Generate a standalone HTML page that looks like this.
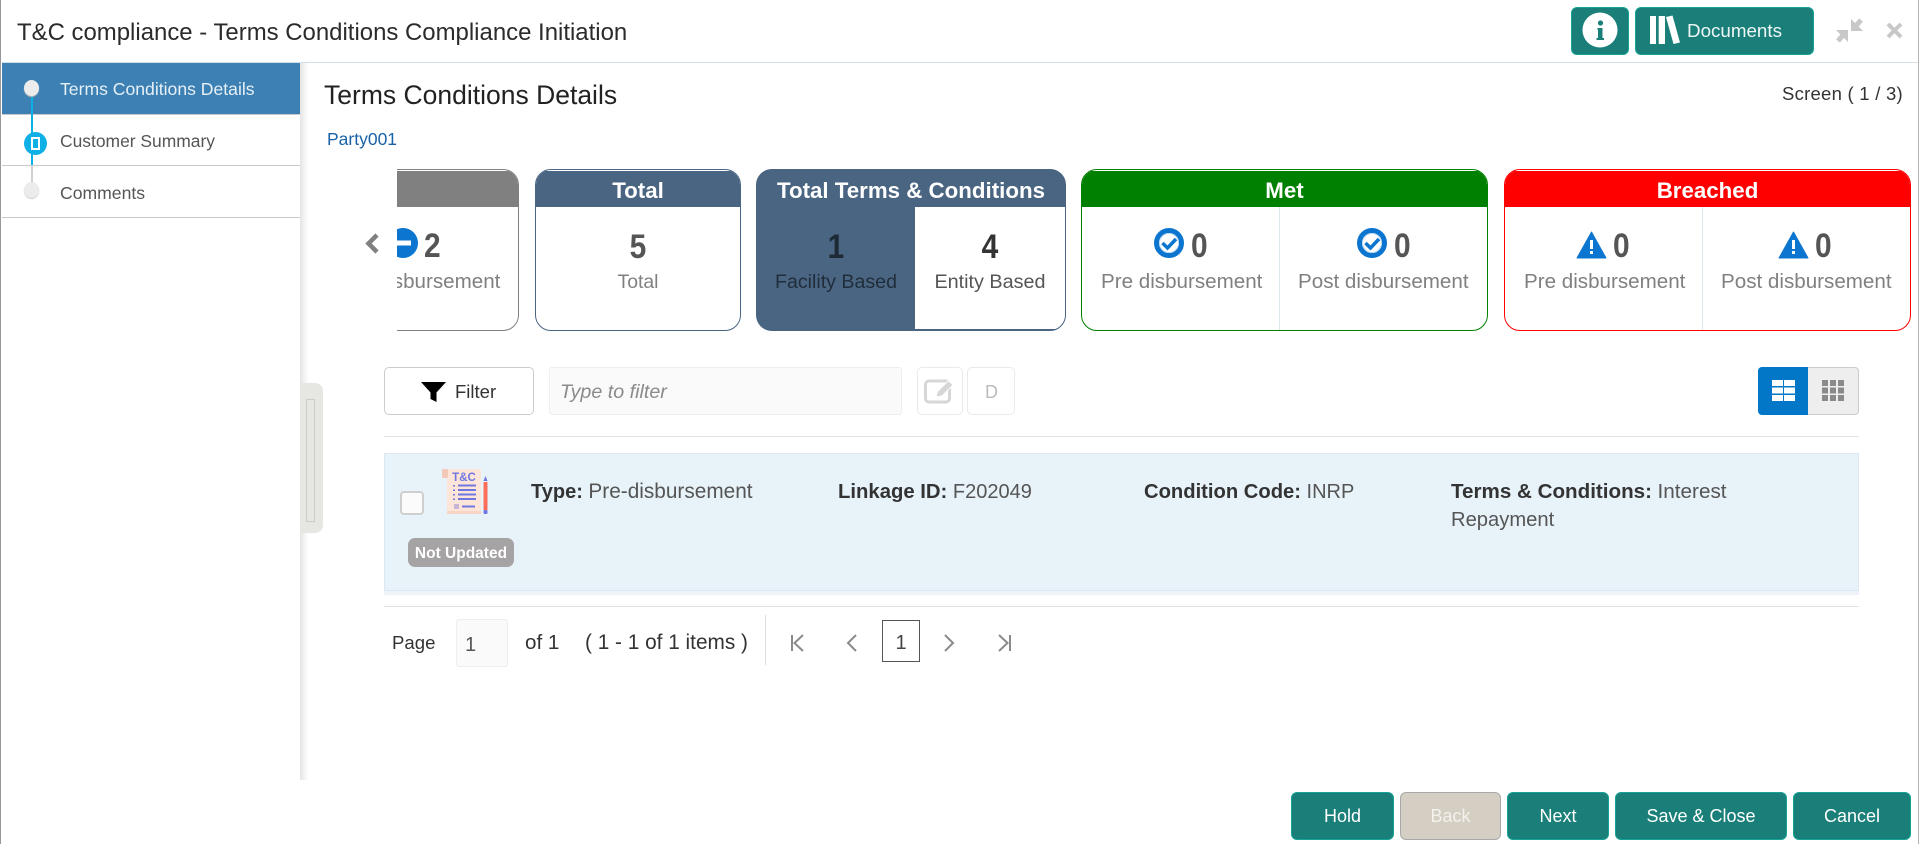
<!DOCTYPE html>
<html lang="en"><head><meta charset="utf-8"><title>T&amp;C compliance</title>
<style>
html,body{margin:0;padding:0;background:#fff}
#p{position:relative;width:1920px;height:844px;overflow:hidden;background:#fff;font-family:"Liberation Sans",Arial,sans-serif;color:#333}
.t{position:absolute;white-space:nowrap;line-height:30px}
.a{position:absolute;box-sizing:border-box}
.c{text-align:center}
.card{position:absolute;box-sizing:border-box;top:169px;height:162px;border:1px solid;border-radius:16px;overflow:hidden;background:#fff}
.hd{position:absolute;left:0;right:0;top:1px;height:36px;color:#fff;font-weight:bold;font-size:22.300px;line-height:40px;text-align:center}
.lb{color:#808080;font-size:20.600px}
.n{font-weight:bold;font-size:34px;color:#555;transform:scaleX(.88);transform-origin:0 50%}
.n.c{transform-origin:50% 50%}
.b{position:absolute;box-sizing:border-box;top:792px;height:48px;background:#1b7f79;border:1px solid #14a396;border-radius:6px;color:#fff;font-size:18px;line-height:46px;text-align:center}
svg{position:absolute;overflow:visible}
b{color:#333}
.v{color:#555;font-size:20px}
</style></head><body><div id="p">
<!-- window frame -->
<div class="a" style="left:0;top:0;width:1px;height:844px;background:#999"></div>
<div class="a" style="left:1918px;top:0;width:1px;height:844px;background:#b5b5b5"></div>
<div class="a" style="left:2px;top:62px;width:1916px;height:1px;background:#d5dfe5"></div>
<div class="t" style="left:17px;top:18px;font-size:23.950px;color:#2b2b2b">T&amp;C compliance - Terms Conditions Compliance Initiation</div>

<!-- header buttons -->
<div class="a" style="left:1571px;top:7px;width:58px;height:48px;background:#1b7f79;border:1px solid #14a396;border-radius:6px"></div>
<div class="a" style="left:1635px;top:7px;width:179px;height:48px;background:#1b7f79;border:1px solid #14a396;border-radius:6px"></div>
<svg style="left:0;top:0" width="1920" height="70">
<circle cx="1600" cy="30" r="17.500" fill="#fff"/>
<circle cx="1600.500" cy="23" r="2.600" fill="#1b7f79"/>
<path d="M1597.500 28h5v10h1.500v2h-7.500v-2h1.500v-8h-.5z" fill="#1b7f79"/>
<path d="M1650 16h6v28h-6zM1658.700 16h6.300v28h-6.300zM1666 17l6.500-1.500 7.500 27-6.500 1.500z" fill="#fff"/>
<path d="M1851 19v12h12z M1848 42V30h-12z" fill="#c8c8c8"/>
<path d="M1855 27l6-7M1844 34l-6 7" stroke="#c8c8c8" stroke-width="5" fill="none"/>
<path d="M1888 24l13 13M1901 24l-13 13" stroke="#c8c8c8" stroke-width="4" fill="none"/>
</svg>
<div class="t" style="left:1687px;top:16px;font-size:18.800px;color:#eef6f5">Documents</div>
<div class="t" style="left:1782px;top:79px;font-size:18.500px;letter-spacing:.25px;color:#333">Screen ( 1 / 3)</div>

<!-- sidebar -->
<div class="a" style="left:300px;top:63px;width:9px;height:717px;background:linear-gradient(90deg,#e4e4e4,#f6f6f6 60%,#fff)"></div>
<div class="a" style="left:2px;top:63px;width:298px;height:51px;background:#3d80b3"></div>
<div class="a" style="left:2px;top:114px;width:298px;height:1px;background:#c9c9c9"></div>
<div class="a" style="left:2px;top:165px;width:298px;height:1px;background:#c9c9c9"></div>
<div class="a" style="left:2px;top:217px;width:298px;height:1px;background:#c9c9c9"></div>
<div class="a" style="left:31px;top:95px;width:2px;height:70px;background:#0ab1e6"></div>
<div class="a" style="left:31px;top:165px;width:2px;height:18px;background:#d0d0d0"></div>
<div class="a" style="left:24px;top:80px;width:15px;height:16px;border-radius:50%;background:#ececec;box-shadow:0 1px 1px #bbb"></div>
<div class="a" style="left:24px;top:182px;width:15px;height:16px;border-radius:50%;background:#ececec;box-shadow:0 1px 1px #ccc"></div>
<div class="a" style="left:24px;top:132px;width:23px;height:23px;border-radius:50%;background:#0fb0e5"></div>
<div class="a" style="left:31px;top:137px;width:9px;height:13px;border:2px solid #fff;background:#0fb0e5"></div>
<div class="t" style="left:60px;top:74px;font-size:17.600px;color:#e6f0f7">Terms Conditions Details</div>
<div class="t" style="left:60px;top:126px;font-size:17.450px;color:#555">Customer Summary</div>
<div class="t" style="left:60px;top:178px;font-size:17.600px;color:#555">Comments</div>
<!-- handle -->
<div class="a" style="left:300px;top:383px;width:23px;height:150px;background:#e6e6e3;border-radius:0 8px 8px 0"></div>
<div class="a" style="left:306px;top:399px;width:9px;height:123px;border:1px solid #ccc"></div>

<!-- headings -->
<div class="t" style="left:324px;top:80px;font-size:26.500px;color:#222">Terms Conditions Details</div>
<div class="t" style="left:327px;top:124px;font-size:17.500px;color:#1a62a8">Party001</div>

<!-- chevron -->
<svg style="left:0;top:0" width="400" height="300"><path d="M377 235l-8.500 8.500 8.500 8.500" stroke="#808080" stroke-width="4.500" fill="none"/></svg>

<!-- clipped card -->
<div class="a" style="left:397px;top:169px;width:123px;height:162px;overflow:hidden">
 <div class="card" style="left:-101px;top:0;width:223px;border-color:#808080">
  <div class="hd" style="background:#808080"></div>
 </div>
 <svg style="left:0;top:0" width="123" height="162"><circle cx="6" cy="74" r="15" fill="#0b75cf"/><rect x="-5" y="71.500" width="19" height="5" fill="#fff"/></svg>
 <div class="t n" style="left:27px;top:62px">2</div>
 <div class="t lb" style="left:-58px;top:98px">Pre disbursement</div>
</div>

<!-- Total -->
<div class="card" style="left:535px;width:206px;border-color:#4a6582">
 <div class="hd" style="background:#4a6582">Total</div>
</div>
<div class="t n c" style="left:535px;width:206px;top:232px">5</div>
<div class="t lb c" style="left:535px;width:206px;top:267px;font-size:19.400px">Total</div>

<!-- Total T&C -->
<div class="card" style="left:756px;width:310px;border-color:#4a6582;background:#4a6582">
 <div class="hd" style="background:#4a6582">Total Terms &amp; Conditions</div>
 <div class="a" style="left:158px;top:37px;width:150px;height:122px;background:#fff"></div>
</div>
<div class="t n c" style="left:757px;width:158px;top:232px;color:#1d2a36">1</div>
<div class="t c" style="left:757px;width:158px;top:267px;font-size:19.600px;color:#1f2d3a">Facility Based</div>
<div class="t n c" style="left:915px;width:150px;top:232px;color:#333">4</div>
<div class="t c" style="left:915px;width:162px;margin-left:-6px;top:267px;font-size:19.800px;color:#555">Entity Based</div>

<!-- Met -->
<div class="card" style="left:1081px;width:407px;border-color:#008000">
 <div class="hd" style="background:#008000">Met</div>
 <div class="a" style="left:197px;top:37px;width:1px;height:123px;background:#dde7ec"></div>
</div>
<!-- Breached -->
<div class="card" style="left:1504px;width:407px;border-color:#ff0000">
 <div class="hd" style="background:#ff0000">Breached</div>
 <div class="a" style="left:197px;top:37px;width:1px;height:123px;background:#dde7ec"></div>
</div>
<svg style="left:0;top:0" width="1920" height="300">
<g fill="none">
<circle cx="1169" cy="243" r="12.500" stroke="#0b75cf" stroke-width="5"/><circle cx="1169" cy="243" r="9.500" stroke="#bcd9f0" stroke-width="1"/><path d="M1162.500 243l5 5 8.500-9" stroke="#0b75cf" stroke-width="3.500"/>
<circle cx="1372" cy="243" r="12.500" stroke="#0b75cf" stroke-width="5"/><circle cx="1372" cy="243" r="9.500" stroke="#bcd9f0" stroke-width="1"/><path d="M1365.500 243l5 5 8.500-9" stroke="#0b75cf" stroke-width="3.500"/>
</g>
<path d="M1591.500 232l14.500 26h-29z" fill="#0b75cf" stroke="#0b75cf" stroke-width="1" stroke-linejoin="round"/>
<path d="M1590 240h3v9h-3zM1590 251h3v3h-3z" fill="#fff"/>
<path d="M1793.500 232l14.500 26h-29z" fill="#0b75cf" stroke="#0b75cf" stroke-width="1" stroke-linejoin="round"/>
<path d="M1792 240h3v9h-3zM1792 251h3v3h-3z" fill="#fff"/>
</svg>
<div class="t n" style="left:1191px;top:231px">0</div>
<div class="t n" style="left:1394px;top:231px">0</div>
<div class="t n" style="left:1613px;top:231px">0</div>
<div class="t n" style="left:1815px;top:231px">0</div>
<div class="t lb" style="left:1101px;top:267px">Pre disbursement</div>
<div class="t lb" style="left:1298px;top:267px">Post disbursement</div>
<div class="t lb" style="left:1524px;top:267px">Pre disbursement</div>
<div class="t lb" style="left:1721px;top:267px">Post disbursement</div>

<!-- filter row -->
<div class="a" style="left:384px;top:367px;width:150px;height:48px;border:1px solid #ccc;border-radius:5px;background:#fff"></div>
<svg style="left:0;top:0" width="1920" height="440">
<path d="M421 382h25l-9.500 10.500V402l-6-3v-6.500z" fill="#000"/>
<rect x="925.500" y="381" width="24" height="21" rx="3.500" fill="none" stroke="#d6d6d6" stroke-width="3"/>
<path d="M936 397l1.500-5.500 11-11 4.500 4.500-11 11z" fill="#d6d6d6" stroke="#fff" stroke-width="1"/>
</svg>
<div class="t" style="left:455px;top:377px;font-size:18.500px;color:#333">Filter</div>
<div class="a" style="left:549px;top:367px;width:353px;height:48px;border:1px solid #eee;border-radius:3px;background:#fafafa"></div>
<div class="t" style="left:560px;top:377px;font-size:19.700px;font-style:italic;color:#8a8a8a">Type to filter</div>
<div class="a" style="left:917px;top:367px;width:46px;height:48px;border:1px solid #eaeaea;border-radius:5px"></div>
<div class="a" style="left:967px;top:367px;width:48px;height:48px;border:1px solid #eaeaea;border-radius:5px"></div>
<div class="t c" style="left:968px;width:47px;top:377px;font-size:18px;color:#bbb">D</div>
<div class="a" style="left:1758px;top:367px;width:50px;height:48px;background:#0277c8;border-radius:4px 0 0 4px"></div>
<div class="a" style="left:1808px;top:367px;width:51px;height:48px;background:#eee;border:1px solid #ccc;border-left:0;border-radius:0 4px 4px 0"></div>
<svg style="left:0;top:0" width="1920" height="440">
<path d="M1772 380h11v6h-11zM1784 380h11v6h-11zM1772 387.500h11v6h-11zM1784 387.500h11v6h-11zM1772 395h11v6h-11zM1784 395h11v6h-11z" fill="#fff"/>
<path d="M1822 380h6v6h-6zM1830 380h6v6h-6zM1838 380h6v6h-6zM1822 387.500h6v6h-6zM1830 387.500h6v6h-6zM1838 387.500h6v6h-6zM1822 395h6v6h-6zM1830 395h6v6h-6zM1838 395h6v6h-6z" fill="#8a8a8a"/>
</svg>
<div class="a" style="left:384px;top:436px;width:1475px;height:1px;background:#e2e2e2"></div>

<!-- row -->
<div class="a" style="left:384px;top:453px;width:1475px;height:138px;background:#e7f2f9;border:1px solid #d9e8f2"></div>
<div class="a" style="left:384px;top:591px;width:1475px;height:4px;background:#edf3f8"></div>
<div class="a" style="left:384px;top:606px;width:1475px;height:1px;background:#e2e2e2"></div>
<div class="a" style="left:400px;top:491px;width:24px;height:24px;background:#fbfbfb;border:2px solid #cfcfcf;border-radius:4px"></div>
<svg style="left:0;top:0" width="600" height="600">
<rect x="447" y="469" width="34" height="45" rx="2" fill="#fde5da"/>
<rect x="447" y="511" width="34" height="3" fill="#f8d4c4"/>
<rect x="442" y="469" width="6" height="9" rx="1" fill="#f2c9b8"/>
<text x="464" y="481" text-anchor="middle" font-family="Liberation Sans" font-weight="bold" font-size="11.500" fill="#6f78e0">T&amp;C</text>
<path d="M458 484.500h18v2h-18zM458 489h18v2h-18zM458 493.500h18v2h-18zM458 498h18v2h-18zM462 505.500h13v2h-13z" fill="#6f78e0"/>
<path d="M453 485h2v1.500h-2zM453 489.500h2v1.500h-2zM453 494h2v1.500h-2zM453 498.500h2v1.500h-2z" fill="#6f78e0"/>
<rect x="454" y="504" width="5" height="5" fill="#c9b6d6"/>
<rect x="483.500" y="482" width="4" height="28" fill="#ff6f5a"/>
<rect x="483.500" y="510" width="4" height="4" rx="1" fill="#6f78e0"/>
<path d="M485.500 476l2 5h-4z" fill="#6f78e0"/>
</svg>
<div class="a" style="left:408px;top:538px;width:106px;height:29px;background:#a5a3a3;border-radius:7px;color:#fff;font-weight:bold;font-size:15.500px;line-height:31px;text-align:center">Not Updated</div>
<div class="t v" style="left:531px;top:477px"><b>Type:</b> <span style="font-size:20.800px">Pre-disbursement</span></div>
<div class="t v" style="left:838px;top:477px"><b style="font-size:20.300px">Linkage ID:</b> F202049</div>
<div class="t v" style="left:1144px;top:477px"><b style="font-size:20.200px">Condition Code:</b> INRP</div>
<div class="t v" style="left:1451px;top:477px"><b style="font-size:20.600px">Terms &amp; Conditions:</b> <span style="font-size:20.700px">Interest</span></div>
<div class="t v" style="left:1451px;top:505px;font-size:20.200px">Repayment</div>

<!-- pager -->
<div class="t" style="left:392px;top:628px;font-size:18.600px;color:#333">Page</div>
<div class="a" style="left:456px;top:619px;width:52px;height:48px;background:#fafafa;border:1px solid #eee;border-radius:3px"></div>
<div class="t" style="left:465px;top:630px;font-size:20px;color:#555">1</div>
<div class="t" style="left:525px;top:628px;font-size:20.600px;color:#333">of 1</div>
<div class="t" style="left:585px;top:628px;font-size:20.800px;color:#333">( 1 - 1 of 1 items )</div>
<div class="a" style="left:765px;top:615px;width:1px;height:50px;background:#ddd"></div>
<svg style="left:0;top:0" width="1100" height="700" fill="none" stroke="#8a8a8a" stroke-width="2">
<path d="M792 635v16M803 635l-8.500 8 8.500 8"/>
<path d="M856 635l-8 8 8 8"/>
<path d="M945 635l8 8-8 8"/>
<path d="M1010 635v16M999 635l8.500 8-8.500 8"/>
</svg>
<div class="a" style="left:882px;top:620px;width:38px;height:42px;border:1px solid #555"></div>
<div class="t c" style="left:882px;width:38px;top:628px;font-size:20px;color:#444">1</div>

<!-- footer -->
<div class="b" style="left:1291px;width:103px">Hold</div>
<div class="b" style="left:1400px;width:101px;background:#d4cec3;border-color:#a8a8a8;color:#f4f2ee">Back</div>
<div class="b" style="left:1507px;width:102px">Next</div>
<div class="b" style="left:1615px;width:172px">Save &amp; Close</div>
<div class="b" style="left:1793px;width:118px">Cancel</div>
</div></body></html>
